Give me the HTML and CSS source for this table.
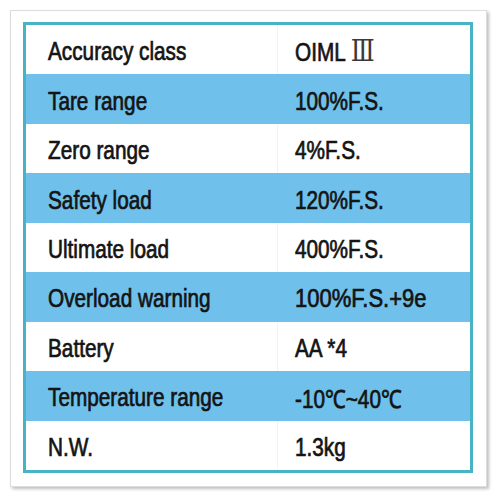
FILE: index.html
```html
<!DOCTYPE html>
<html lang="en">
<head>
    <meta charset="UTF-8">
    <meta name="viewport" content="width=device-width, initial-scale=1.0">
    <title>Specifications</title>
    <link rel="stylesheet" href="styles.css">
</head>
<body>
    <div class="frame">
        <div class="specs">
            <div class="row">
                <div class="label"><span>Accuracy class</span></div>
                <div class="value"><span>OIML <em class="roman">Ⅲ</em></span></div>
            </div>
            <div class="row blue">
                <div class="label"><span>Tare range</span></div>
                <div class="value"><span>100%F.S.</span></div>
            </div>
            <div class="row">
                <div class="label"><span>Zero range</span></div>
                <div class="value"><span>4%F.S.</span></div>
            </div>
            <div class="row blue">
                <div class="label"><span>Safety load</span></div>
                <div class="value"><span>120%F.S.</span></div>
            </div>
            <div class="row">
                <div class="label"><span>Ultimate load</span></div>
                <div class="value"><span>400%F.S.</span></div>
            </div>
            <div class="row blue">
                <div class="label"><span>Overload warning</span></div>
                <div class="value"><span class="wide">100%F.S.+9e</span></div>
            </div>
            <div class="row">
                <div class="label"><span>Battery</span></div>
                <div class="value"><span>AA *4</span></div>
            </div>
            <div class="row blue">
                <div class="label"><span>Temperature range</span></div>
                <div class="value"><span>-10℃~40℃</span></div>
            </div>
            <div class="row">
                <div class="label"><span>N.W.</span></div>
                <div class="value"><span>1.3kg</span></div>
            </div>
        </div>
    </div>
</body>
</html>
```

FILE: styles.css
```css
body {
    margin: 0;
    padding: 10px;
    background-color: #ffffff;
    font-family: "Liberation Sans", Arial, sans-serif;
}
.frame {
    box-sizing: border-box;
    width: 477px;
    height: 477px;
    padding: 11px 13px 13px 12px;
    background-color: #ffffff;
    border: 1px solid #dcdcdc;
    box-shadow: 2px 2px 3px rgba(0, 0, 0, 0.25);
}
.specs {
    box-sizing: border-box;
    width: 450px;
    height: 451px;
    border: 3px solid #47b3c5;
    display: grid;
    grid-template-rows: repeat(9, 1fr);
}
.row {
    display: grid;
    grid-template-columns: 251px 1fr;
    background-color: #ffffff;
}
.row.blue {
    background-color: #6fc1eb;
}
.label,
.value {
    display: flex;
    align-items: center;
    padding-top: 4px;
    font-size: 25px;
    color: #141414;
    white-space: nowrap;
}
.label {
    padding-left: 22px;
}
.value {
    padding-left: 17px;
    border-left: 1px solid #f1f4f6;
}
.row.blue .value {
    border-left-color: #6fc1eb;
}
.label span,
.value span {
    display: inline-block;
    transform: scaleX(0.83);
    transform-origin: left center;
    -webkit-text-stroke: 0.7px #141414;
}
.value span.wide {
    transform: scaleX(0.88);
}
.roman {
    font-style: normal;
    font-family: "DejaVu Serif", serif;
    font-size: 30px;
    line-height: 1;
    -webkit-text-stroke: 0;
    color: #3a3a3a;
}
```
